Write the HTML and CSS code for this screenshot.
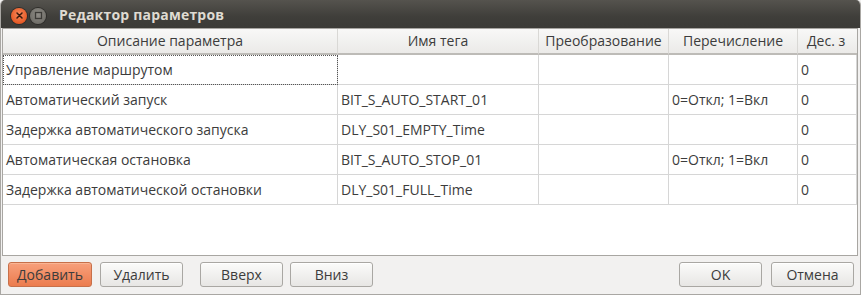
FILE: index.html
```html
<!DOCTYPE html>
<html lang="ru">
<head>
<meta charset="utf-8">
<title>Редактор параметров</title>
<link rel="stylesheet" href="styles.css">
</head>
<body>
<div class="window">
  <div class="titlebar">
    <div class="wbtns">
      <span class="wbtn close">
        <svg width="15" height="15" viewBox="0 0 15 15"><path d="M5 5 L10 10 M10 5 L5 10" stroke="#3a1a0c" stroke-width="1.5" stroke-linecap="round"/></svg>
      </span>
      <span class="wbtn mini">
        <svg width="15" height="15" viewBox="0 0 15 15"><rect x="4.5" y="4.5" width="6" height="6" fill="none" stroke="#3c3b37" stroke-width="1.3"/></svg>
      </span>
    </div>
    <div class="title">Редактор параметров</div>
  </div>
  <div class="body">
    <div class="frame">
      <table class="grid">
        <colgroup>
          <col class="c1"><col class="c2"><col class="c3"><col class="c4"><col class="c5">
        </colgroup>
        <thead>
          <tr>
            <th>Описание параметра</th>
            <th>Имя тега</th>
            <th>Преобразование</th>
            <th>Перечисление</th>
            <th class="left">Дес. з</th>
          </tr>
        </thead>
        <tbody>
          <tr>
            <td class="focus">Управление маршрутом</td><td></td><td></td><td></td><td>0</td>
          </tr>
          <tr>
            <td>Автоматический запуск</td><td>BIT_S_AUTO_START_01</td><td></td><td>0=Откл; 1=Вкл</td><td>0</td>
          </tr>
          <tr>
            <td>Задержка автоматического запуска</td><td>DLY_S01_EMPTY_Time</td><td></td><td></td><td>0</td>
          </tr>
          <tr>
            <td>Автоматическая остановка</td><td>BIT_S_AUTO_STOP_01</td><td></td><td>0=Откл; 1=Вкл</td><td>0</td>
          </tr>
          <tr>
            <td>Задержка автоматической остановки</td><td>DLY_S01_FULL_Time</td><td></td><td></td><td>0</td>
          </tr>
        </tbody>
      </table>
    </div>
    <div class="actions">
      <div class="group">
        <button class="btn primary">Добавить</button>
        <button class="btn">Удалить</button>
        <button class="btn gap">Вверх</button>
        <button class="btn tight">Вниз</button>
      </div>
      <div class="group right">
        <button class="btn">OK</button>
        <button class="btn">Отмена</button>
      </div>
    </div>
  </div>
</div>
</body>
</html>
```
FILE: styles.css
```css
* { box-sizing: border-box; }
html, body { margin: 0; padding: 0; background: #f2f1f0; }
body { font-family: "Open Sans", "DejaVu Sans", sans-serif; font-size: 14px; color: #3c3c3c; }

.window {
  width: 861px;
  height: 295px;
  display: flex;
  flex-direction: column;
  background: #f2f1f0;
  border: 1px solid #a9a7a3;
  border-top: none;
  border-radius: 5px 5px 0 0;
  overflow: hidden;
}

.titlebar {
  height: 28px;
  flex: none;
  display: flex;
  align-items: center;
  background: linear-gradient(#55534e, #3f3e3a 60%, #3c3b37);
  margin: 0 -1px;
  padding-left: 11px;
}
.wbtns { display: flex; gap: 3px; padding-top: 3px; }
.wbtn {
  width: 16px; height: 16px; border-radius: 50%;
  display: flex; align-items: center; justify-content: center;
}
.wbtn svg { display: block; }
.close {
  background: radial-gradient(circle at 50% 40%, #f78a5e, #e65a25 70%, #c9461a);
  box-shadow: 0 0 0 1px #2e2d2a;
}
.mini {
  background: radial-gradient(circle at 50% 40%, #8f8d87, #6f6d67 75%, #5b5954);
  box-shadow: 0 0 0 1px #2e2d2a;
}
.title {
  margin-left: 13px;
  padding-top: 1px;
  color: #dfdbd2;
  font-family: "Open Sans", "DejaVu Sans", sans-serif;
  font-weight: 700;
  font-size: 14px;
  letter-spacing: 0.2px;
}

.body {
  flex: 1;
  display: flex;
  flex-direction: column;
  padding: 0 2px 0 1px;
}

.frame {
  height: 228px;
  border: 1px solid #a8a6a2;
  background: #ffffff;
  overflow: hidden;
}

.grid {
  border-collapse: separate;
  border-spacing: 0;
  table-layout: fixed;
  width: 854px;
}
.c1 { width: 335px; }
.c2 { width: 201px; }
.c3 { width: 130px; }
.c4 { width: 129px; }
.c5 { width: 59px; }

.grid th {
  height: 26px;
  padding: 0 3px 1px;
  font-weight: 400;
  text-align: center;
  white-space: nowrap;
  overflow: hidden;
  color: #3c3c3c;
  background: linear-gradient(#f8f8f7, #ebeae8);
  border-right: 1px solid #d9d8d5;
  border-bottom: 2px solid #bdbbb7;
}
.grid th.left { text-align: left; padding-left: 9px; border-right: none; }

.grid td {
  height: 30px;
  padding: 0 3px 1px;
  white-space: nowrap;
  overflow: hidden;
  border-right: 1px solid #d6d6d6;
  border-bottom: 1px solid #d6d6d6;
}
.grid td.focus { outline: 1px dotted #555; outline-offset: -1px; }

.actions {
  display: flex;
  justify-content: space-between;
  padding: 6px 4px 0 6px;
}
.group { display: flex; gap: 8px; }
.group.right { gap: 9px; }
.btn {
  width: 83px;
  height: 25px;
  font-family: inherit;
  font-size: 14px;
  color: #3c3c3c;
  border: 1px solid #a9a7a3;
  border-radius: 3px;
  background: linear-gradient(#fbfbfa, #e7e6e4);
  box-shadow: inset 0 1px 0 #ffffff;
  padding: 0 0 1px;
}
.btn.gap { margin-left: 9px; }
.btn.tight { margin-left: -1px; }
.btn.primary {
  width: 84px;
  border-color: #c7704a;
  background: linear-gradient(#f7a07c, #ec7c4e);
  box-shadow: inset 0 1px 0 #f9b595;
}
```
